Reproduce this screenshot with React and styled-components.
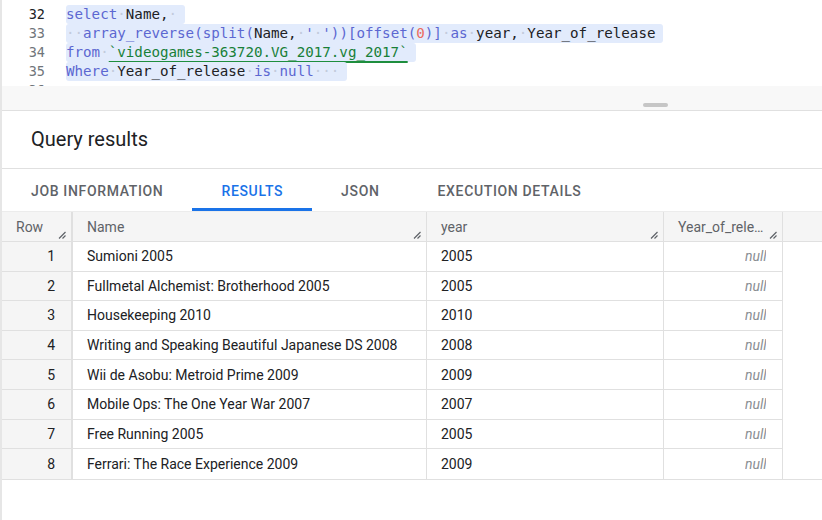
import React from 'react';
import styled, { createGlobalStyle } from 'styled-components';

const GlobalStyle = createGlobalStyle`
  html, body {
    margin: 0;
    padding: 0;
    background: #ffffff;
  }
  body {
    font-family: Roboto, "Liberation Sans", Arial, sans-serif;
    color: #202124;
  }
  * {
    box-sizing: border-box;
  }
`;

const MONO = `"DejaVu Sans Mono", "Liberation Mono", monospace`;

// code lines: [text, kind]
const codeLines = [
  { no: 31, tokens: [] },
  {
    no: 32,
    active: true,
    sel: true,
    tokens: [['select', 'kw'], [' ', 'ws'], ['Name', 'id'], [',', 'id'], [' ', 'ws']],
  },
  {
    no: 33,
    sel: true,
    tokens: [
      [' ', 'ws'], [' ', 'ws'],
      ['array_reverse(split(', 'fn'], ['Name', 'id'], [',', 'id'], [' ', 'ws'],
      ["'", 'str'], [' ', 'ws'], ["'", 'str'], ['))[offset(', 'fn'], ['0', 'num'], [')]', 'fn'],
      [' ', 'ws'], ['as', 'kw'], [' ', 'ws'], ['year', 'id'], [',', 'id'], [' ', 'ws'],
      ['Year_of_release', 'id'],
    ],
  },
  {
    no: 34,
    sel: true,
    tokens: [['from', 'kw'], [' ', 'ws'], ['`videogames-363720.VG_2017.vg_2017`', 'tbl']],
  },
  {
    no: 35,
    sel: true,
    tokens: [
      ['Where', 'kw'], [' ', 'ws'], ['Year_of_release', 'id'], [' ', 'ws'],
      ['is', 'kw'], [' ', 'ws'], ['null', 'kw'], [' ', 'ws'], [' ', 'ws'], [' ', 'ws'],
    ],
  },
  { no: 36, tokens: [] },
];

const rows = [
  ['Sumioni 2005', '2005'],
  ['Fullmetal Alchemist: Brotherhood 2005', '2005'],
  ['Housekeeping 2010', '2010'],
  ['Writing and Speaking Beautiful Japanese DS 2008', '2008'],
  ['Wii de Asobu: Metroid Prime 2009', '2009'],
  ['Mobile Ops: The One Year War 2007', '2007'],
  ['Free Running 2005', '2005'],
  ['Ferrari: The Race Experience 2009', '2009'],
];

const tabs = ['Job information', 'Results', 'JSON', 'Execution details'];

const tokenColors = {
  kw: '#5c67d1',
  fn: '#5c67d1',
  id: '#202124',
  str: '#5c67d1',
  num: '#ec6a5e',
  tbl: '#188038',
};

const Page = styled.div`
  width: 822px;
  height: 520px;
  border-left: 2px solid #e6e6e6;
  overflow: hidden;
  background: #ffffff;
`;

/* ---------- editor ---------- */

const Editor = styled.div`
  height: 86px;
  overflow: hidden;
  background: #ffffff;
  font-family: ${MONO};
  font-size: 14.2px;
`;

const EditorLines = styled.div`
  margin-top: -14px;
`;

const Line = styled.div`
  display: flex;
  align-items: center;
  height: 19px;
  line-height: 19px;
  white-space: pre;
`;

const LineNo = styled.span`
  width: 43px;
  margin-right: 21px;
  text-align: right;
  color: ${(p) => (p.$active ? '#202124' : '#70757a')};
  font-size: 13.5px;
`;

const Selection = styled.span`
  display: inline-flex;
  align-items: center;
  height: 19px;
  padding-right: ${(p) => (p.$sel ? '8px' : '0')};
  background: ${(p) => (p.$sel ? '#e2ebfc' : 'transparent')};
  border-radius: 3px;
`;

const Token = styled.span`
  color: ${(p) => tokenColors[p.$kind] || '#202124'};
  ${(p) =>
    p.$kind === 'tbl' &&
    `
    text-decoration: underline;
    text-decoration-color: #1e8e3e;
    text-decoration-thickness: 1.5px;
    text-underline-offset: 4px;
  `}
`;

const Space = styled.span`
  color: #c3cbdc;
`;

const EditorFooter = styled.div`
  height: 25px;
  background: #f8f8f8;
  border-bottom: 1px solid #e0e0e0;
  display: flex;
  align-items: flex-end;
  padding: 0 0 3px 641px;
`;

const DragHandle = styled.div`
  width: 25px;
  height: 4px;
  border-radius: 2px;
  background: #c6c6c6;
`;

/* ---------- results ---------- */

const ResultsTitle = styled.div`
  height: 58px;
  display: flex;
  align-items: center;
  padding: 0 0 2px 29px;
  font-size: 20px;
  color: #202124;
  border-bottom: 1px solid #e0e0e0;
`;

const TabBar = styled.div`
  display: flex;
  height: 42px;
`;

const Tab = styled.div`
  display: flex;
  align-items: center;
  padding: 2px 29px 0 29px;
  font-size: 14px;
  font-weight: 500;
  letter-spacing: 0.65px;
  text-transform: uppercase;
  color: ${(p) => (p.$active ? '#1a73e8' : '#5f6368')};
  box-shadow: ${(p) => (p.$active ? 'inset 0 -3px 0 #1a73e8' : 'none')};
`;

const Table = styled.div`
  border-top: 1px solid #ececec;
  border-bottom: 1px solid #e0e0e0;
`;

const GRID = '71px 354px 237px 119px 1fr';

const HeaderRow = styled.div`
  display: grid;
  grid-template-columns: ${GRID};
  height: 30px;
  background: #f5f5f5;
  border-bottom: 1px solid #e0e0e0;
`;

const HeaderCell = styled.div`
  position: relative;
  padding: 5px 16px 0 14px;
  font-size: 14px;
  line-height: 20px;
  color: #5f6368;
  white-space: nowrap;
  overflow: hidden;
  text-overflow: ellipsis;
  border-right: ${(p) => (p.$first ? '2px' : '1px')} solid #e0e0e0;
`;

const Grip = styled.svg`
  position: absolute;
  right: 5px;
  bottom: 2px;
`;

const HeaderFill = styled.div``;

const DataRow = styled.div`
  display: grid;
  grid-template-columns: ${GRID};
  height: 29.6px;
`;

const Cell = styled.div`
  display: flex;
  align-items: center;
  justify-content: ${(p) => (p.$right ? 'flex-end' : 'flex-start')};
  padding: ${(p) => (p.$right ? '0 16px 0 14px' : '0 14px')};
  font-size: 14px;
  color: #202124;
  white-space: nowrap;
  background: ${(p) => (p.$shade ? '#f5f5f5' : '#ffffff')};
  border-right: ${(p) => (p.$first ? '2px' : '1px')} solid #e0e0e0;
  border-bottom: ${(p) => (p.$last ? '0' : '1px solid #e0e0e0')};
`;

const NullText = styled.span`
  display: block;
  width: 21px;
  overflow: hidden;
  font-style: italic;
  color: #8a8e93;
`;

const FillCell = styled.div``;

const ResizeGrip = () => (
  <Grip width="8" height="8" viewBox="0 0 8 8">
    <path d="M1 7.5 L7.5 1 M4.5 7.5 L7.5 4.5" stroke="#5f6368" strokeWidth="1.2" fill="none" />
  </Grip>
);

export default function App() {
  return (
    <>
      <GlobalStyle />
      <Page>
        <Editor>
          <EditorLines>
            {codeLines.map((line) => (
              <Line key={line.no}>
                <LineNo $active={line.active}>{line.no}</LineNo>
                {line.tokens.length > 0 && (
                  <Selection $sel={line.sel}>
                    {line.tokens.map(([text, kind], i) =>
                      kind === 'ws' ? (
                        <Space key={i}>·</Space>
                      ) : (
                        <Token key={i} $kind={kind}>
                          {text}
                        </Token>
                      )
                    )}
                  </Selection>
                )}
              </Line>
            ))}
          </EditorLines>
        </Editor>
        <EditorFooter>
          <DragHandle />
        </EditorFooter>

        <ResultsTitle>Query results</ResultsTitle>

        <TabBar>
          {tabs.map((t) => (
            <Tab key={t} $active={t === 'Results'}>
              {t}
            </Tab>
          ))}
        </TabBar>

        <Table>
          <HeaderRow>
            <HeaderCell $first>
              Row
              <ResizeGrip />
            </HeaderCell>
            <HeaderCell>
              Name
              <ResizeGrip />
            </HeaderCell>
            <HeaderCell>
              year
              <ResizeGrip />
            </HeaderCell>
            <HeaderCell>
              Year_of_release
              <ResizeGrip />
            </HeaderCell>
            <HeaderFill />
          </HeaderRow>
          {rows.map(([name, year], i) => {
            const last = i === rows.length - 1;
            return (
              <DataRow key={i}>
                <Cell $first $right $shade $last={last}>
                  {i + 1}
                </Cell>
                <Cell $last={last}>{name}</Cell>
                <Cell $last={last}>{year}</Cell>
                <Cell $right $last={last}>
                  <NullText>null</NullText>
                </Cell>
                <FillCell />
              </DataRow>
            );
          })}
        </Table>
      </Page>
    </>
  );
}
